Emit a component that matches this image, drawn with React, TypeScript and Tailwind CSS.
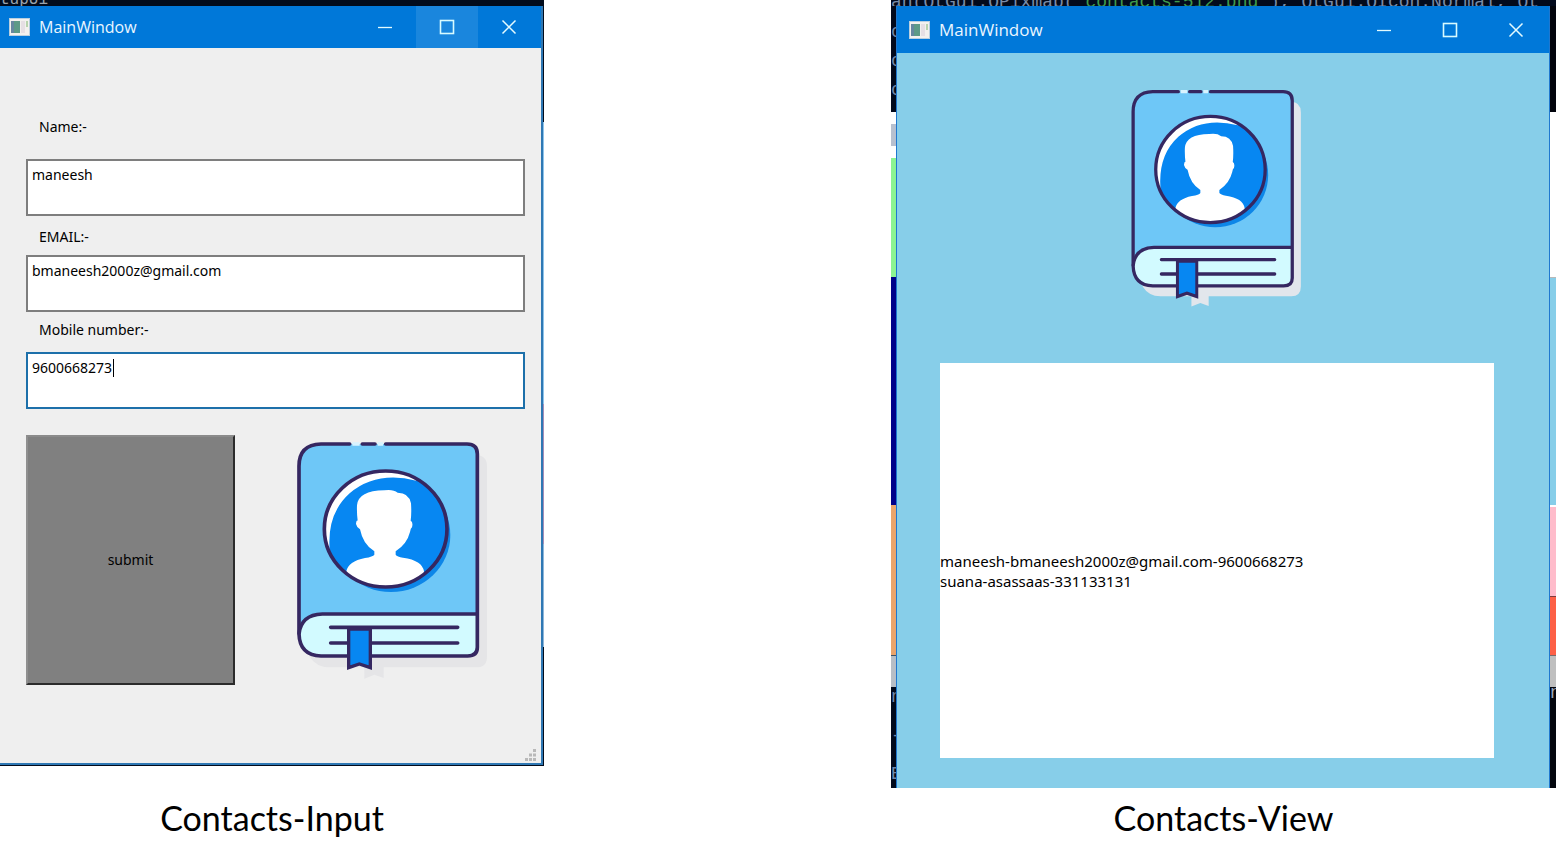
import React from "react";

const contacts = [
  { name: "maneesh", email: "bmaneesh2000z@gmail.com", mobile: "9600668273" },
  { name: "suana", email: "asassaas", mobile: "331133131" },
];

function ContactBook({ className, shadow }: { className: string; shadow: string }) {
  const id = React.useId();
  return (
    <svg className={className} viewBox="0 0 780 750" preserveAspectRatio="none" role="img" aria-label="Contact book">
      <defs>
        <clipPath id={id}>
          <ellipse cx="368" cy="267" rx="184" ry="174" />
        </clipPath>
      </defs>
      <path d="M170 45H638Q672 45 672 80V650Q672 682 640 682H362V714L334 704L304 716V682H200Q160 682 140 650Z" fill={shadow} />
      <path d="M162 12H620Q643 12 643 36V620Q643 646 616 646H166Q108 642 108 580V72Q110 14 162 12Z" fill="#6ec7f7" />
      <path d="M178 522H643V620Q643 648 616 648H166Q108 642 108 588Q114 526 178 522Z" fill="#d2faff" />
      <ellipse cx="384" cy="285" rx="178" ry="171" fill="#0d86e8" />
      <ellipse cx="368" cy="267" rx="184" ry="174" fill="#0787f2" />
      <g clipPath={`url(#${id})`}>
        <path d="M184 93H460V122Q340 92 260 160Q188 224 201 340L180 350Z" fill="#fff" />
        <path d="M364 151Q390 147 404 158Q438 158 444 190Q446 220 443 242Q451 246 447 262Q443 264 441 276Q432 312 398 334V344Q402 350 420 353Q478 361 483 394L478 450H250V394Q256 364 306 354Q330 350 334 344V334Q300 314 291 268Q281 262 279 252Q280 240 284 242Q281 220 282 196Q286 152 364 151Z" fill="#fff" />
      </g>
      <ellipse cx="368" cy="267" rx="184" ry="174" fill="none" stroke="#352761" strokeWidth="11" />
      <g fill="none" stroke="#352761" strokeWidth="11" strokeLinecap="round" strokeLinejoin="round">
        <path d="M260 12H174Q108 14 108 78V580" />
        <path d="M298 12H336M368 12H612Q643 12 643 42V622Q643 648 614 648H174Q110 646 108 582Q114 524 178 522H638" />
        <path d="M203 562H584M203 609H584" />
      </g>
      <path d="M257 567H322V683L289 672L257 683Z" fill="#0787f2" stroke="#352761" strokeWidth="10" />
      <path d="M268 12H290M344 12H360" stroke="#d8f3ff" strokeWidth="11" />
    </svg>
  );
}

function AppIcon() {
  return (
    <svg className="h-[18px] w-[21px] shrink-0" viewBox="0 0 21 18" aria-hidden="true">
      <rect width="21" height="18" fill="#b9cfdf" />
      <rect x="1" y="1" width="19" height="16" fill="#f3f1ef" />
      <rect x="2" y="3" width="9" height="12" fill="#5d9a87" />
      <rect x="2" y="3" width="3" height="12" fill="#6687a0" />
      <rect x="12" y="3" width="4" height="12" fill="#e6dfe4" />
      <rect x="17" y="3" width="2" height="6" fill="#b7d3ad" />
    </svg>
  );
}

function TitleBar({ className, buttonClass, maxClass = "" }: { className: string; buttonClass: string; maxClass?: string }) {
  return (
    <header className={`flex items-center bg-[#0078d9] leading-6 text-[#eaf6ff] ${className}`}>
      <AppIcon />
      <h2 className="ml-[9px] flex-1 font-['Open_Sans','Noto_Sans',sans-serif]">MainWindow</h2>
      <div className="flex h-full">
        <button type="button" aria-label="Minimize" className={`flex h-full items-center justify-center ${buttonClass}`}>
          <svg className="size-4" viewBox="0 0 16 16"><path d="M1 8.5H15" stroke="#e4fbff" strokeWidth="1.3" /></svg>
        </button>
        <button type="button" aria-label="Maximize" className={`flex h-full items-center justify-center ${buttonClass} ${maxClass}`}>
          <svg className="size-4" viewBox="0 0 16 16"><rect x="1.5" y="1.5" width="13" height="13" fill="none" stroke="#d8fbff" strokeWidth="1.6" /></svg>
        </button>
        <button type="button" aria-label="Close" className={`flex h-full items-center justify-center ${buttonClass}`}>
          <svg className="size-4" viewBox="0 0 16 16"><path d="M1.5 1.5L14.5 14.5M14.5 1.5L1.5 14.5" stroke="#e4fbff" strokeWidth="1.5" /></svg>
        </button>
      </div>
    </header>
  );
}

const fieldClass =
  "block h-[57px] w-full resize-none overflow-hidden border-2 bg-white px-1 pt-1 text-sm leading-5 text-black outline-none";

function InputWindow() {
  return (
    <div className="bg-[#020c1c] text-sm">
      <div className="h-1.5 overflow-hidden">
        <div className="-mt-2.5 font-['Liberation_Mono',monospace] text-[16px] leading-5 text-[#9aa3ad]">tupUi</div>
      </div>
      <div className="flex pb-px">
        <div className="min-w-0 flex-1 border-r-2 border-b-2 border-[#2f78b4] bg-[#efefef]">
          <TitleBar className="h-[42px] pr-px pl-[9px] text-base" buttonClass="w-[62px]" maxClass="bg-[#1a86dd]" />
          <form className="pr-4 pl-[26px]" onSubmit={(e) => e.preventDefault()}>
            <label htmlFor="name" className="block pt-[69px] pb-[22px] pl-[13px] leading-5">Name:-</label>
            <textarea id="name" defaultValue="maneesh" className={`${fieldClass} border-[#7e7e7e]`} />
            <label htmlFor="email" className="block pt-[11px] pb-2 pl-[13px] leading-5">EMAIL:-</label>
            <textarea id="email" defaultValue="bmaneesh2000z@gmail.com" className={`${fieldClass} border-[#7e7e7e]`} />
            <label htmlFor="mobile" className="block pt-2 pb-3 pl-[13px] leading-5">Mobile number:-</label>
            <div className="relative">
              <textarea id="mobile" defaultValue="9600668273" className={`${fieldClass} border-[#1d70aa]`} />
              <span className="absolute top-[7px] left-[87px] h-[18px] w-px bg-black" />
            </div>
            <div className="mt-[26px] flex items-stretch">
              <button type="submit" className="h-[250px] w-[209px] border-2 border-t-[#8b8b8b] border-r-[#2b2b2b] border-b-[#2b2b2b] border-l-[#8f8f8f] bg-[#808080] text-black">
                submit
              </button>
              <ContactBook className="mt-[5px] ml-7 h-[250px] w-[260px]" shadow="#e5e5e7" />
            </div>
          </form>
          <div className="flex h-[73px] items-end justify-end pr-1 pb-0.5">
            <svg className="size-3" viewBox="0 0 12 12" fill="#b9b9b9" aria-hidden="true">
              <path d="M8 0h3v3h-3zM8 4.5h3v3h-3zM4 4.5h3v3h-3zM8 9h3v3h-3zM4 9h3v3h-3zM0 9h3v3h-3z" />
            </svg>
          </div>
        </div>
        <div className="flex w-px flex-col">
          <div className="h-[116px]" />
          <div className="h-[282px] bg-[#8fc4ea]" />
          <div className="h-[140px] bg-[#a58fb8]" />
          <div className="h-[103px] bg-[#8fb6d8]" />
        </div>
      </div>
    </div>
  );
}

function ViewWindow() {
  return (
    <div className="overflow-hidden bg-[#020a1c] text-[15px]">
      <div className="h-1.5 overflow-hidden">
        <div className="-mt-2 font-['Liberation_Mono',monospace] text-[18px] leading-5 whitespace-pre text-[#7a8ca8]">
          an(QtGui.QPixmap( <span className="text-[#3f9a4c]">contacts-512.png</span> ), QtGui.QIcon.Normal, Qt
        </div>
      </div>
      <div className="flex">
        <div className="flex w-[5px] flex-col overflow-hidden font-['Liberation_Mono',monospace] text-[18px] text-[#6f86a8]">
          <div className="flex h-[106px] flex-col pt-3 leading-[29px]">
            <span>c</span><span>c</span><span>c</span>
          </div>
          <div className="h-[46px] border-y-[12px] border-white bg-[#b7c0cf]" />
          <div className="h-[119px] bg-[#8cf492]" />
          <div className="h-[228px] bg-[#000089]" />
          <div className="h-[150px] bg-[#eba56c]" />
          <div className="h-8 border-t border-[#3d5266] bg-[#b7bec6]" />
          <div className="flex h-[101px] flex-col justify-between pb-1 leading-5">
            <span>n</span><span>-</span><span>E</span>
          </div>
        </div>
        <div className="min-w-0 flex-1 border-r border-l border-[#1f78d0] bg-[#87cee9]">
          <TitleBar className="h-[47px] pl-3 text-[17px]" buttonClass="w-[66px]" />
          <main className="flex flex-col items-center pt-[35px] pr-[55px] pb-[30px] pl-[43px]">
            <ContactBook className="h-[229px] w-[232px]" shadow="#e2e6ec" />
            <ul className="mt-[46px] flex h-[395px] w-full flex-col justify-center bg-white pt-5 leading-5">
              {contacts.map((c) => (
                <li key={c.mobile}>{`${c.name}-${c.email}-${c.mobile}`}</li>
              ))}
            </ul>
          </main>
        </div>
        <div className="flex w-1.5 flex-col overflow-hidden font-['Liberation_Mono',monospace] text-[18px] text-[#9aa7bd]">
          <div className="h-[106px] bg-[#02040c]" />
          <div className="h-[165px] bg-white" />
          <div className="h-[228px] border-t border-[#b9b9b9] bg-[#87cee9]" />
          <div className="h-[91px] border-t-2 border-white bg-[#ffbccb]" />
          <div className="h-[59px] border-t border-[#803c3c] bg-[#fd6046]" />
          <div className="h-8 border-t border-[#7a6a6a] bg-[#bfbfbf]" />
          <div className="h-[101px] bg-[#04060e] leading-3">n</div>
        </div>
      </div>
    </div>
  );
}

const captionClass = "mt-auto text-center font-['Lato',sans-serif] text-[34px] leading-10";

export default function App() {
  return (
    <div className="min-h-screen bg-white font-['Noto_Sans',sans-serif] text-black">
      <div className="grid grid-cols-[544fr_347fr_665fr] pr-px">
        <figure className="flex min-w-0 flex-col">
          <InputWindow />
          <figcaption className={captionClass}>Contacts-Input</figcaption>
        </figure>
        <div />
        <figure className="flex min-w-0 flex-col gap-2.5">
          <ViewWindow />
          <figcaption className={captionClass}>Contacts-View</figcaption>
        </figure>
      </div>
    </div>
  );
}
